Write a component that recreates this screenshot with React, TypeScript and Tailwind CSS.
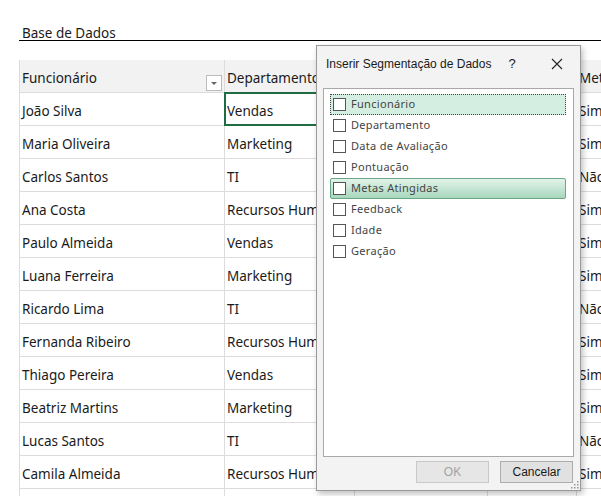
import React from "react";

const rows: [string, string, string][] = [
  ["João Silva", "Vendas", "Sim"],
  ["Maria Oliveira", "Marketing", "Sim"],
  ["Carlos Santos", "TI", "Não"],
  ["Ana Costa", "Recursos Humanos", "Sim"],
  ["Paulo Almeida", "Vendas", "Sim"],
  ["Luana Ferreira", "Marketing", "Sim"],
  ["Ricardo Lima", "TI", "Não"],
  ["Fernanda Ribeiro", "Recursos Humanos", "Sim"],
  ["Thiago Pereira", "Vendas", "Sim"],
  ["Beatriz Martins", "Marketing", "Sim"],
  ["Lucas Santos", "TI", "Não"],
  ["Camila Almeida", "Recursos Humanos", "Sim"],
  ["", "", ""],
];

const fields = [
  "Funcionário",
  "Departamento",
  "Data de Avaliação",
  "Pontuação",
  "Metas Atingidas",
  "Feedback",
  "Idade",
  "Geração",
];

function Cell({ children, className = "" }: { children?: React.ReactNode; className?: string }) {
  return (
    <div className={`h-[32px] flex items-center pt-[5px] pl-[2px] overflow-hidden whitespace-nowrap border-r border-[#dcdcdc] ${className}`}>
      {children}
    </div>
  );
}

export default function App() {
  return (
    <div
      className="relative w-[601px] h-[496px] overflow-hidden bg-white text-[#1a1a1a]"
      style={{ fontFamily: "'Noto Sans', 'Open Sans', sans-serif" }}
    >
      <div className="pl-[19px] pt-[24px]">
        <div className="h-[17px] border-b border-black pl-[3px] pt-[1px] text-[13.5px] leading-[16px]">Base de Dados</div>
        <div className="mt-[19px] border-l border-[#dcdcdc] text-[13.5px]">
          <div className="grid grid-cols-[205px_130px_133px_89px_60px] bg-[#f2f2f2] border-b border-[#dcdcdc]">
            <Cell className="relative">
              Funcionário
              <div className="absolute right-[2px] top-[15px] w-[16px] h-[16px] border border-[#bdbdbd] bg-white flex items-center justify-center">
                <svg width="8" height="5" viewBox="0 0 8 5"><path d="M1 1 L4 4 L7 1Z" fill="#666" /></svg>
              </div>
            </Cell>
            <Cell>Departamento</Cell>
            <Cell></Cell>
            <Cell></Cell>
            <Cell className="pl-[1px]">Metas Atingidas</Cell>
          </div>
          {rows.map((r, i) => (
            <div key={i} className="grid grid-cols-[205px_130px_133px_89px_60px] border-b border-[#dcdcdc]">
              <Cell>{r[0]}</Cell>
              {i === 0 ? (
                <div className="h-[34px] flex items-center pt-[5px] pl-[1px] border-2 border-[#1f6b44] -ml-[1px] -mt-[1px] mb-[-1px]">{r[1]}</div>
              ) : (
                <Cell>{r[1]}</Cell>
              )}
              <Cell></Cell>
              <Cell></Cell>
              <Cell className="pl-[1px]">{r[2]}</Cell>
            </div>
          ))}
        </div>
      </div>

      {/* Dialog */}
      <div className="absolute left-[316px] top-[45px] w-[265px] h-[446px] bg-[#f3f3f3] border border-[#9a9a9a] shadow-[2px_3px_6px_rgba(0,0,0,0.25)] flex flex-col">
        <div
          className="h-[36px] flex items-center pl-[9px] pr-[17px] text-[12px] text-[#1a1a1a]"
          style={{ fontFamily: "'Liberation Sans', Arial, sans-serif" }}
        >
          <span className="flex-1">Inserir Segmentação de Dados</span>
          <span className="w-[12px] text-center mr-[33px] text-[13px]">?</span>
          <svg width="12" height="12" viewBox="0 0 12 12"><path d="M1 1 L11 11 M11 1 L1 11" stroke="#222" strokeWidth="1.1" /></svg>
        </div>
        <div className="mx-[6px] mt-[6px] h-[369px] bg-white border border-[#a9a9a9] pt-[5px] pl-[6px] pr-[7px]">
          {fields.map((f, i) => {
            let cls = "border border-transparent";
            if (i === 0) cls = "border border-dotted border-[#444] bg-[#d4efe1]";
            if (i === 4) cls = "border border-[#6aa786] rounded-[2px] bg-gradient-to-b from-[#e3f4ea] to-[#a8d7bd]";
            return (
              <div key={f} className={`h-[21px] flex items-center pl-[2px] ${cls}`}>
                <div className="w-[13px] h-[13px] border border-[#555] bg-white mr-[5px]" />
                <span className="text-[11px] text-[#444] tracking-[0.3px]">{f}</span>
              </div>
            );
          })}
        </div>
        <div
          className="flex justify-end gap-[11px] pr-[7px] mt-[4px] text-[12px]"
          style={{ fontFamily: "'Liberation Sans', Arial, sans-serif" }}
        >
          <div className="w-[73px] h-[22px] flex items-center justify-center border border-[#c8c8c8] bg-[#e6e6e6] text-[#a3a3a3]">OK</div>
          <div className="w-[73px] h-[22px] flex items-center justify-center border border-[#adadad] bg-[#e1e1e1] text-[#1a1a1a]">Cancelar</div>
        </div>
        <svg className="absolute right-[1px] bottom-[1px]" width="9" height="9" viewBox="0 0 9 9">
          <g fill="#9a9a9a">
            <rect x="7" y="1" width="1.5" height="1.5" />
            <rect x="4" y="4" width="1.5" height="1.5" />
            <rect x="7" y="4" width="1.5" height="1.5" />
            <rect x="1" y="7" width="1.5" height="1.5" />
            <rect x="4" y="7" width="1.5" height="1.5" />
            <rect x="7" y="7" width="1.5" height="1.5" />
          </g>
        </svg>
      </div>
    </div>
  );
}
